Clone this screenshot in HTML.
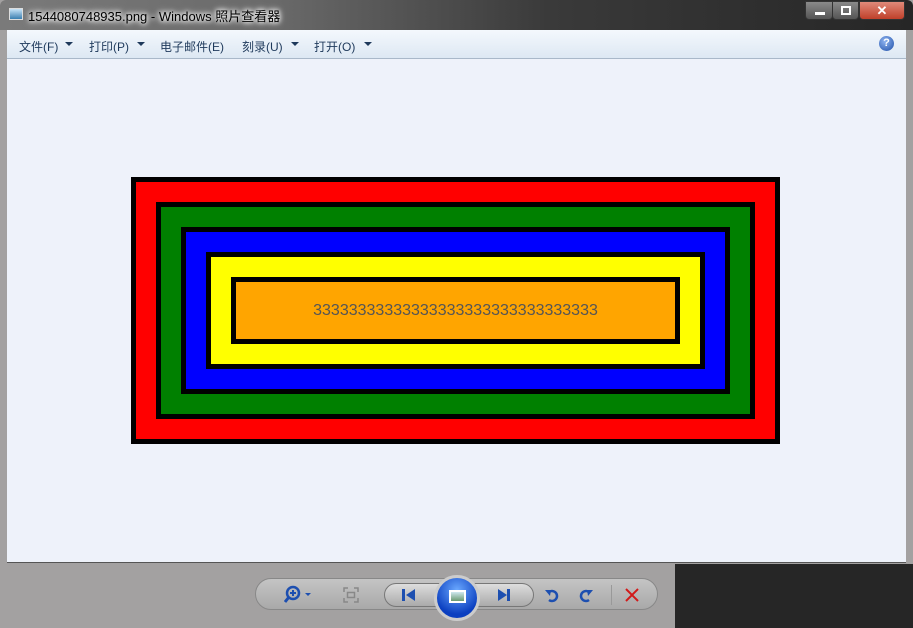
<!DOCTYPE html>
<html><head><meta charset="utf-8"><style>
*{margin:0;padding:0;box-sizing:border-box}
body{width:913px;height:628px;overflow:hidden;position:relative;background:#a3a1a1;font-family:"Liberation Sans","Noto Sans CJK SC",sans-serif}
#title{position:absolute;left:0;top:0;width:913px;height:30px;background:linear-gradient(90deg,#7a7a7a 0%,#6a6a6a 30%,#3a3a3a 60%,#262626 100%);border-radius:6px 6px 0 0}
#title .t{position:absolute;left:28px;top:6px;font-size:13px;color:#000;text-shadow:0 0 8px #fff,0 0 6px #fff,0 0 4px #fff}
#title .ic{position:absolute;left:9px;top:8px;width:14px;height:12px;background:linear-gradient(#c8e4f8,#3a7fb0);border:1px solid #ddd}
.btn{position:absolute;top:1px;height:19px;border:1px solid #333;border-radius:0 0 4px 4px}
#menu{position:absolute;left:7px;top:30px;width:899px;height:29px;background:linear-gradient(#f4f8fd,#dde8f3);border-bottom:1px solid #a9b8c9}
#menu span{position:absolute;top:8px;font-size:12px;color:#1e395b}
.ar{position:absolute;top:12px;width:0;height:0;border-left:4px solid transparent;border-right:4px solid transparent;border-top:4px solid #1e395b}
#content{position:absolute;left:7px;top:59px;width:899px;height:504px;background:#eef2fa;border-bottom:1px solid #555}
#dark{position:absolute;left:675px;top:564px;width:238px;height:64px;background:#262626}
.b{border:5px solid #000;padding:20px}
#box{position:absolute;left:131px;top:177px}
#bar{position:absolute;left:255px;top:578px;width:403px;height:32px;border:1px solid #888;border-radius:16px;background:linear-gradient(#c4c4c4,#a9a9a9)}
</style></head><body>
<div id="title"><div class="ic"></div><div class="t">1544080748935.png - Windows 照片查看器</div>
<div class="btn" style="left:805px;width:28px;background:linear-gradient(#8a8a8a,#555)"><div style="position:absolute;left:9px;top:10px;width:10px;height:3px;background:#fff"></div></div>
<div class="btn" style="left:832px;width:27px;background:linear-gradient(#8a8a8a,#555)"><div style="position:absolute;left:8px;top:4px;width:10px;height:9px;border:2px solid #fff"></div></div>
<div class="btn" style="left:859px;width:46px;background:linear-gradient(#e08a7a,#c0402a);color:#fff;text-align:center;font-weight:bold;font-size:13px;line-height:17px">✕</div>
</div>
<div id="menu">
<span style="left:12px">文件(F)</span><div class="ar" style="left:58px"></div>
<span style="left:82px">打印(P)</span><div class="ar" style="left:130px"></div>
<span style="left:153px">电子邮件(E)</span>
<span style="left:235px">刻录(U)</span><div class="ar" style="left:284px"></div>
<span style="left:307px">打开(O)</span><div class="ar" style="left:357px"></div>
<div style="position:absolute;left:872px;top:6px;width:15px;height:15px;border-radius:50%;background:radial-gradient(circle at 40% 35%,#8fb4f0,#1e4fa8);color:#fff;font-size:11px;font-weight:bold;text-align:center;line-height:15px">?</div>
</div>
<div id="content"></div>
<div id="box" class="b" style="background:#f00"><div class="b" style="background:#008000"><div class="b" style="background:#00f"><div class="b" style="background:#ff0"><div style="border:5px solid #000;width:449px;height:67px;background:#ffa500;text-align:center;font-size:16px;line-height:57px;color:#555">33333333333333333333333333333333</div></div></div></div></div>
<div id="dark"></div>
<div id="bar">
<svg style="position:absolute;left:28px;top:6px" width="30" height="20"><circle cx="9" cy="8" r="6" fill="none" stroke="#1d4fb0" stroke-width="2.5"/><path d="M6 8h6M9 5v6" stroke="#1d4fb0" stroke-width="2"/><path d="M5 12l-4 5" stroke="#1d4fb0" stroke-width="3"/><path d="M21 8h6l-3 3z" fill="#1d4fb0"/></svg>
<svg style="position:absolute;left:87px;top:8px" width="16" height="16"><path d="M1 5V1h4M11 1h4v4M15 11v4h-4M5 15H1v-4" fill="none" stroke="#888" stroke-width="1.5"/><rect x="4.5" y="5.5" width="7" height="5" fill="none" stroke="#888" stroke-width="1.5"/></svg>
<div style="position:absolute;left:128px;top:4px;width:150px;height:24px;border:1px solid #777;border-radius:12px;background:linear-gradient(#ddd,#aaa)"></div>
<svg style="position:absolute;left:145px;top:9px" width="16" height="14"><rect x="1" y="1" width="3" height="12" fill="#1d4fb0"/><path d="M14 1v12L5 7z" fill="#1d4fb0"/></svg>
<svg style="position:absolute;left:240px;top:9px" width="16" height="14"><path d="M2 1v12l9-6z" fill="#1d4fb0"/><rect x="11" y="1" width="3" height="12" fill="#1d4fb0"/></svg>
<div style="position:absolute;left:178px;top:-4px;width:46px;height:46px;border-radius:50%;border:3px solid #ccc;background:radial-gradient(circle at 50% 30%,#6aa8ff,#0b3fc0 70%)"><div style="position:absolute;left:12px;top:12px;width:17px;height:13px;background:linear-gradient(#cfe8f0,#6a9a70);border:2px solid #fff"></div></div>
<svg style="position:absolute;left:288px;top:7px" width="16" height="18"><path d="M4 7a5 5 0 1 1 1 7" fill="none" stroke="#1d4fb0" stroke-width="2.5"/><path d="M1 4l6 0-1 6z" fill="#1d4fb0"/></svg>
<svg style="position:absolute;left:322px;top:7px" width="16" height="18"><path d="M12 7a5 5 0 1 0-1 7" fill="none" stroke="#1d4fb0" stroke-width="2.5"/><path d="M15 4l-6 0 1 6z" fill="#1d4fb0"/></svg>
<div style="position:absolute;left:355px;top:6px;width:1px;height:20px;background:#999"></div>
<svg style="position:absolute;left:369px;top:9px" width="14" height="14"><path d="M1 1l12 12M13 1L1 13" stroke="#d21a1a" stroke-width="2"/></svg>
</div>
</body></html>
